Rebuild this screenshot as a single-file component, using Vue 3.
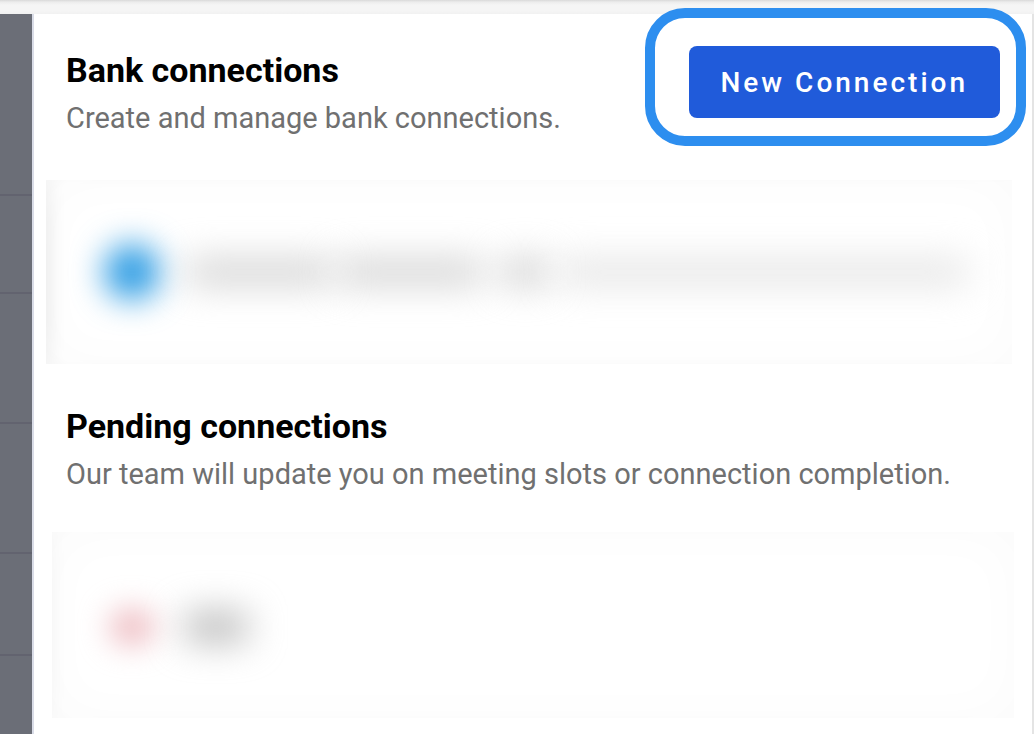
<template>
  <div class="page">
    <div class="topbar"></div>
    <div class="body">
      <aside class="sidebar">
        <div
          v-for="(height, i) in sideRows"
          :key="i"
          class="side-row"
          :style="{ height: height + 'px' }"
        ></div>
      </aside>

      <main class="panel">
        <section class="section">
          <header class="section-header">
            <div class="section-text">
              <h2>Bank connections</h2>
              <p>Create and manage bank connections.</p>
            </div>
            <div class="highlight">
              <button type="button" class="new-button">New Connection</button>
            </div>
          </header>
          <div class="card card-active">
            <div class="dot dot-blue"></div>
            <div class="smudge smudge-name"></div>
            <div class="smudge smudge-type"></div>
            <div class="smudge smudge-code"></div>
            <div class="smudge smudge-detail"></div>
          </div>
        </section>

        <section class="section">
          <header class="section-header">
            <div class="section-text">
              <h2>Pending connections</h2>
              <p>Our team will update you on meeting slots or connection completion.</p>
            </div>
          </header>
          <div class="card card-pending">
            <div class="dot dot-red"></div>
            <div class="smudge smudge-short"></div>
          </div>
        </section>
      </main>
    </div>
  </div>
</template>

<script setup>
import { ref } from 'vue';

const sideRows = ref([182, 98, 130, 130, 102]);
</script>

<style>
body {
  margin: 0;
  background: #fff;
}
</style>

<style scoped>
.page {
  display: flex;
  flex-direction: column;
  min-height: 100vh;
  overflow: hidden;
  font-family: Roboto, "Liberation Sans", sans-serif;
}

.topbar {
  height: 14px;
  background: linear-gradient(#d9d9d9, #ececec 2px, #f5f5f5 5px, #f5f5f5 11px, #f1f1f1);
}

.body {
  display: flex;
  flex: 1;
}

.sidebar {
  width: 32px;
  flex-shrink: 0;
  background: #6b6e77;
  border-right: 2px solid #d9dce7;
}

.side-row {
  box-sizing: border-box;
  border-bottom: 2px solid #62636f;
}

/* the first row has its rule just under it */
.side-row:first-child {
  box-sizing: content-box;
  margin-top: -2px;
}

.panel {
  flex: 1;
  min-width: 0;
  padding-top: 32px;
  border-right: 2px solid #e4e4e4;
}

.section-header {
  display: flex;
  justify-content: space-between;
  align-items: flex-start;
  padding: 0 32px;
}

h2 {
  margin: 0;
  font-size: 34px;
  font-weight: 700;
  line-height: 48px;
  color: #000;
}

p {
  margin: 0;
  font-size: 29px;
  line-height: 48px;
  color: #707070;
  white-space: nowrap;
}

.highlight {
  position: relative;
}

.highlight::after {
  content: "";
  position: absolute;
  top: -38px;
  right: -26px;
  bottom: -28px;
  left: -44px;
  border: 10px solid #2d8eef;
  border-radius: 40px;
  pointer-events: none;
}

.new-button {
  display: block;
  height: 72px;
  padding: 0 32px;
  border: 0;
  border-radius: 8px;
  background: #205bda;
  color: #fff;
  font-family: inherit;
  font-size: 28px;
  font-weight: 500;
  letter-spacing: 3px;
  white-space: nowrap;
  cursor: pointer;
}

.card {
  display: flex;
  align-items: center;
  box-sizing: border-box;
  overflow: hidden;
  background: #fff;
}

.card-active {
  height: 184px;
  margin: 38px 20px 38px 12px;
  padding: 0 44px 0 58px;
  box-shadow: inset 0 0 56px #fbfbfb, inset 14px 0 16px -10px #dedede;
}

.card-pending {
  height: 186px;
  margin: 34px 18px 16px 18px;
  padding: 4px 58px 0;
  box-shadow: inset 0 0 56px #fbfbfb, inset 10px 0 14px -8px #f0f0f0;
}

.dot {
  flex-shrink: 0;
  border-radius: 50%;
}

.dot-blue {
  width: 56px;
  height: 56px;
  background: #2b9be3;
  filter: blur(16px);
}

.dot-red {
  width: 44px;
  height: 36px;
  background: #edb8be;
  filter: blur(15px);
}

.smudge {
  height: 24px;
  border-radius: 8px;
  background: #cecece;
  filter: blur(18px);
}

.smudge-name {
  width: 146px;
  margin-left: 26px;
}

.smudge-type {
  width: 146px;
  margin-left: 6px;
}

.smudge-code {
  width: 42px;
  margin-left: 20px;
  background: #c4c4c4;
}

.smudge-detail {
  flex: 1;
  margin-left: 12px;
  background: #e2e2e2;
}

.smudge-short {
  width: 64px;
  height: 28px;
  margin-left: 30px;
  background: #b4b4b4;
}
</style>
